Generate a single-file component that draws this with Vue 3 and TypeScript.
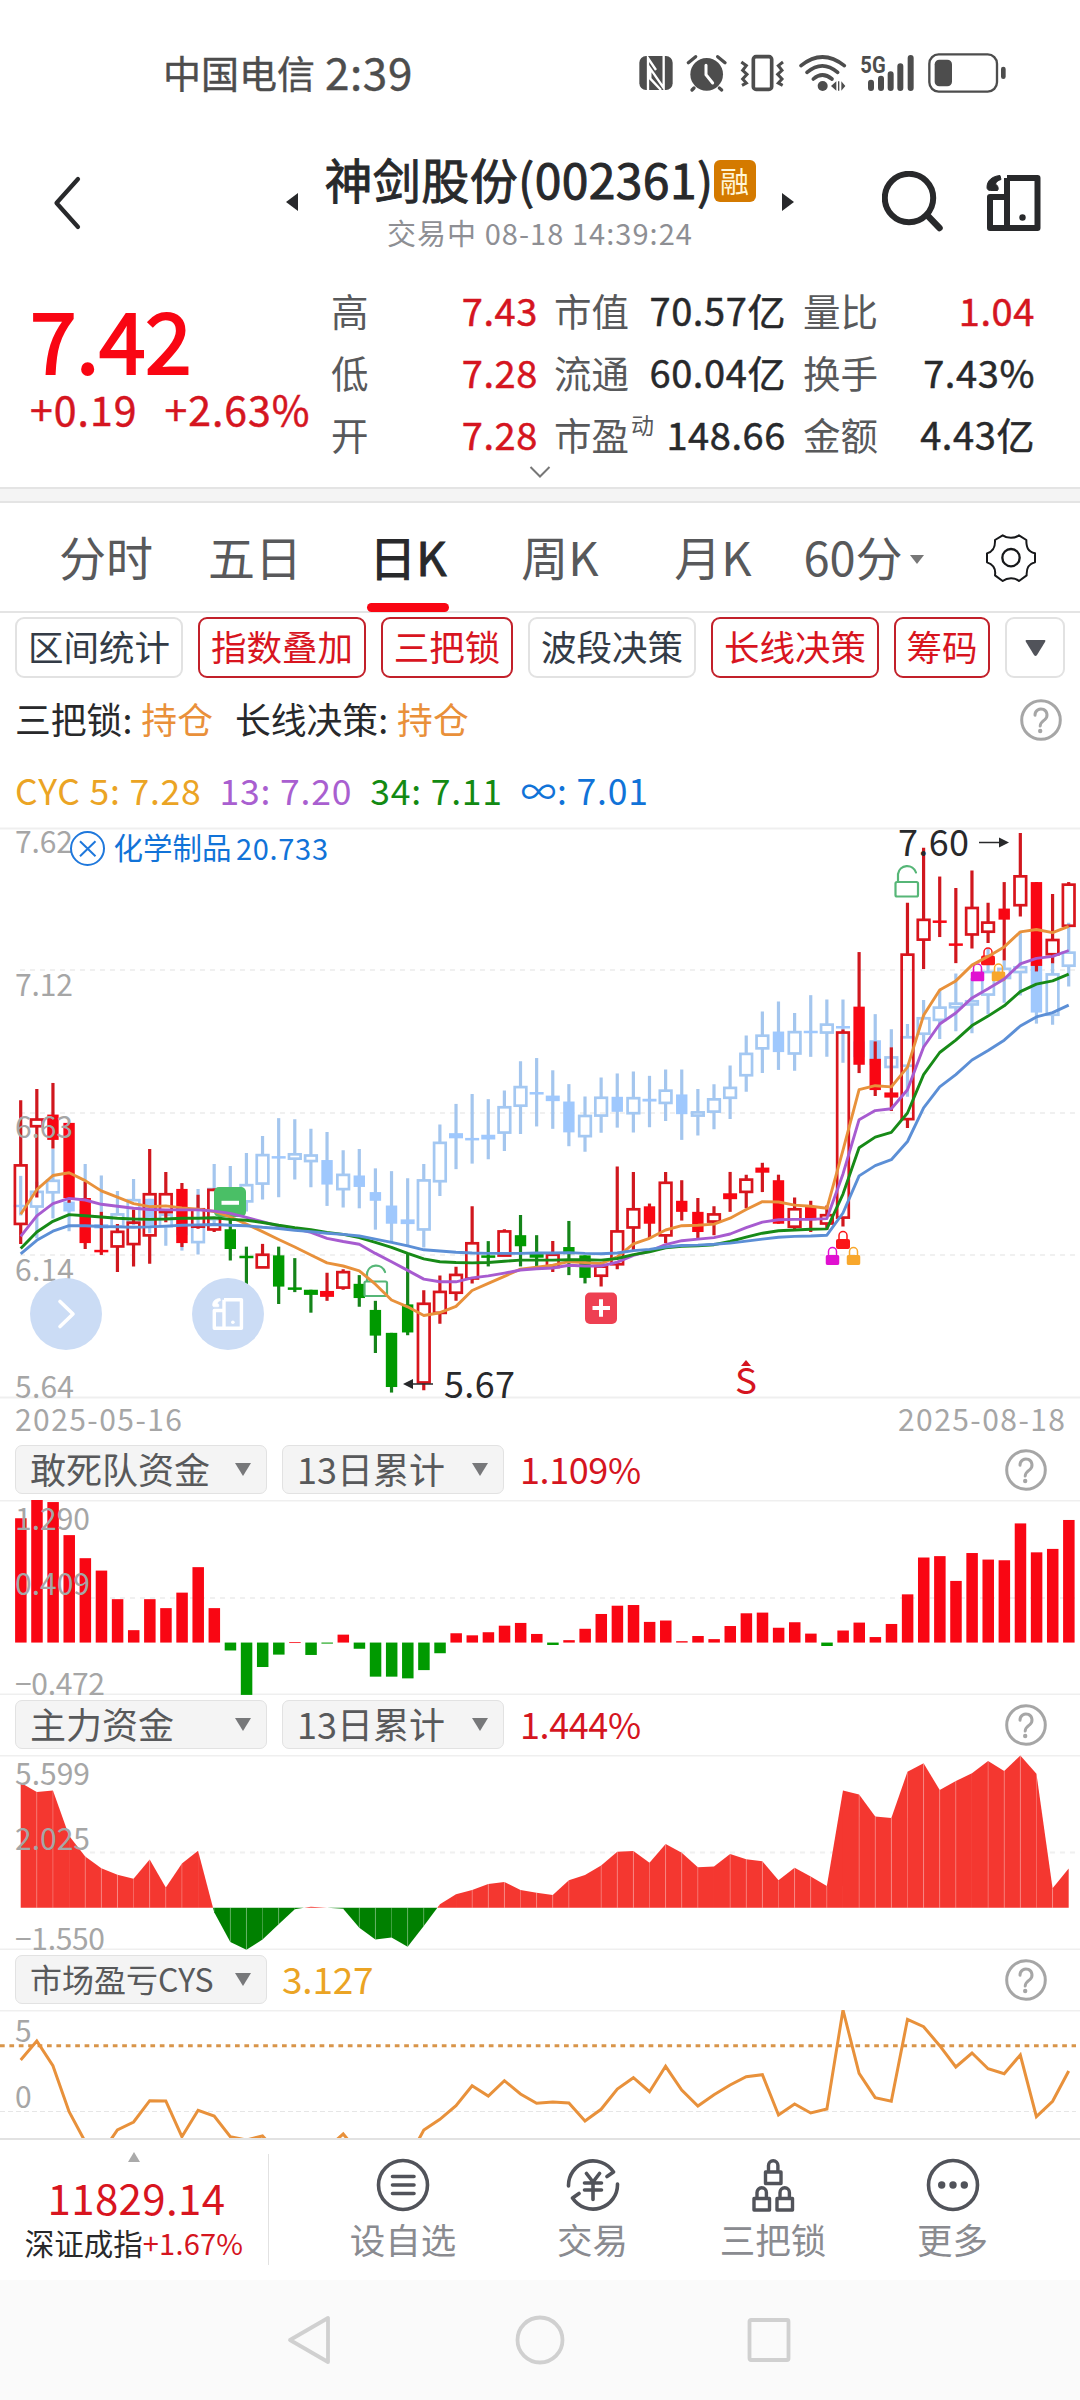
<script setup lang="ts">
type Kind = 'hollow' | 'solid'
interface Candle { x: number; high: number; top: number; bottom: number; low: number; kind: Kind; color: string }

const STEP = 16.123
const X0 = 20.7
const V = 2.529 // vertical data units per pixel in the main chart
const xAt = (i: number): number => X0 + i * STEP
const y = (v: number): number => v / V

// [high, body top, body bottom, low, kind] per trading day; r = hollow red, R = solid red, G = solid green
type Row = [number, number, number, number, string]
const stock: Row[] = [
  [709, 873, 1022, 1072, 'r'], [680, 757, 775, 955, 'r'], [665, 745, 809, 831, 'R'], [766, 766, 956, 968, 'R'],
  [915, 956, 1070, 1085, 'R'], [991, 1087, 1092, 1100, 'R'], [1022, 1041, 1079, 1143, 'r'], [985, 1018, 1073, 1129, 'r'],
  [832, 946, 1051, 1122, 'r'], [890, 946, 992, 1017, 'r'], [918, 933, 1070, 1080, 'R'], [948, 984, 1029, 1034, 'r'],
  [932, 935, 1036, 1042, 'r'], [1010, 1035, 1085, 1114, 'G'], [1079, 1102, 1107, 1195, 'G'], [1072, 1099, 1132, 1132, 'r'],
  [1079, 1101, 1180, 1224, 'G'], [1108, 1182, 1187, 1194, 'G'], [1188, 1188, 1201, 1246, 'G'], [1145, 1191, 1206, 1216, 'R'],
  [1136, 1143, 1183, 1188, 'r'], [1151, 1173, 1209, 1231, 'G'], [1216, 1239, 1304, 1348, 'G'], [1297, 1297, 1434, 1448, 'G'],
  [1095, 1225, 1296, 1303, 'G'], [1189, 1223, 1423, 1442, 'r'], [1152, 1193, 1247, 1274, 'r'], [1130, 1150, 1196, 1216, 'r'],
  [977, 1070, 1160, 1172, 'r'], [1065, 1101, 1106, 1129, 'G'], [1035, 1040, 1102, 1102, 'r'], [999, 1050, 1078, 1129, 'G'],
  [1050, 1097, 1107, 1129, 'G'], [1065, 1099, 1131, 1143, 'r'], [1014, 1080, 1098, 1151, 'G'], [1101, 1101, 1158, 1172, 'G'],
  [1118, 1129, 1153, 1180, 'r'], [876, 1040, 1124, 1136, 'r'], [890, 984, 1031, 1088, 'r'], [970, 977, 1021, 1058, 'R'],
  [890, 917, 1051, 1070, 'r'], [911, 963, 991, 1013, 'R'], [956, 991, 1042, 1057, 'R'], [977, 997, 1016, 1050, 'r'],
  [890, 944, 959, 991, 'R'], [897, 909, 941, 982, 'r'], [867, 879, 892, 941, 'R'], [897, 911, 1021, 1021, 'R'],
  [955, 984, 1029, 1036, 'r'], [963, 977, 1012, 1042, 'R'], [975, 999, 1021, 1036, 'r'], [530, 537, 1006, 1028, 'r'],
  [334, 472, 619, 640, 'R'], [560, 604, 683, 698, 'R'], [575, 689, 702, 736, 'R'], [209, 340, 757, 779, 'r'],
  [70, 252, 303, 377, 'r'], [143, 254, 258, 296, 'R'], [172, 312, 317, 362, 'R'], [128, 222, 290, 325, 'r'],
  [209, 259, 283, 311, 'r'], [157, 224, 252, 355, 'R'], [33, 142, 216, 244, 'r'], [157, 157, 369, 383, 'R'],
  [187, 303, 340, 362, 'r'], [157, 163, 268, 268, 'r'],
]
// b = hollow, B = solid
const sector: Row[] = [
  [900, 973, 977, 1000, 'B'], [915, 940, 978, 1058, 'b'], [832, 912, 942, 1008, 'b'], [940, 965, 990, 1040, 'B'],
  [870, 985, 1022, 1040, 'B'], [899, 1022, 1033, 1033, 'B'], [938, 997, 1028, 1045, 'b'], [908, 961, 1018, 1025, 'b'],
  [958, 958, 1030, 1045, 'B'], [985, 998, 1028, 1077, 'b'], [1000, 1010, 1050, 1089, 'B'], [933, 1025, 1068, 1099, 'b'],
  [870, 933, 1010, 1020, 'b'], [875, 985, 1005, 1020, 'B'], [842, 923, 965, 990, 'b'], [799, 847, 920, 960, 'b'],
  [754, 850, 855, 954, 'B'], [757, 845, 857, 909, 'b'], [781, 848, 863, 929, 'b'], [789, 860, 922, 976, 'B'],
  [835, 897, 934, 980, 'b'], [832, 899, 928, 982, 'B'], [881, 941, 963, 1036, 'B'], [888, 975, 1021, 1070, 'B'],
  [906, 1010, 1022, 1077, 'B'], [870, 911, 1036, 1081, 'b'], [770, 816, 914, 951, 'b'], [718, 792, 805, 883, 'B'],
  [693, 804, 808, 869, 'B'], [706, 796, 808, 858, 'B'], [684, 726, 791, 837, 'b'], [610, 675, 723, 794, 'b'],
  [602, 688, 692, 775, 'B'], [633, 697, 711, 781, 'B'], [668, 712, 790, 825, 'B'], [699, 748, 800, 839, 'b'],
  [651, 702, 748, 791, 'b'], [641, 700, 738, 778, 'B'], [636, 703, 742, 790, 'b'], [647, 705, 712, 777, 'B'],
  [631, 684, 716, 761, 'b'], [631, 694, 744, 809, 'B'], [680, 739, 748, 798, 'b'], [668, 706, 738, 782, 'b'],
  [621, 677, 703, 756, 'b'], [545, 591, 646, 687, 'b'], [484, 545, 578, 640, 'b'], [459, 535, 587, 632, 'B'],
  [488, 536, 591, 634, 'b'], [443, 533, 537, 599, 'B'], [454, 517, 538, 599, 'b'], [454, 521, 526, 614, 'B'],
  [530, 560, 600, 615, 'B'], [491, 557, 620, 640, 'B'], [529, 600, 625, 660, 'b'], [516, 549, 622, 700, 'b'],
  [455, 501, 541, 575, 'b'], [430, 474, 506, 554, 'b'], [388, 464, 474, 534, 'b'], [400, 458, 467, 539, 'b'],
  [325, 384, 442, 491, 'b'], [355, 376, 400, 462, 'b'], [282, 372, 385, 444, 'b'], [280, 300, 487, 515, 'B'],
  [340, 390, 493, 518, 'b'], [260, 335, 369, 421, 'b'],
]
const palette: Record<string, [Kind, string]> = {
  r: ['hollow', '#d9141c'], R: ['solid', '#f90613'], G: ['solid', '#009a00'],
  b: ['hollow', '#a4c8f2'], B: ['solid', '#9fc8fd'],
}
const wick: Record<string, string> = { r: '#d0171e', R: '#d0171e', G: '#15841a', b: '#a4c6ee', B: '#a4c6ee' }
const toCandles = (rows: Row[]): (Candle & { wick: string; bw: number })[] =>
  rows.map(([high, top, bottom, low, k], i) => ({
    x: xAt(i), high: y(high), top: y(top), bottom: y(bottom), low: y(low),
    kind: palette[k][0], color: palette[k][1], wick: wick[k], bw: bottom - top < 17 ? 14 : 11.4,
  }))
const layers = [toCandles(sector), toCandles(stock)]

const cyc = [
  { color: '#e8913b', v: [997, 935, 899, 892, 912, 938, 954, 970, 978, 976, 981, 984, 990, 1004, 1022, 1041, 1061, 1080, 1100, 1120, 1128, 1140, 1174, 1214, 1231, 1253, 1246, 1230, 1190, 1172, 1154, 1136, 1131, 1126, 1117, 1119, 1122, 1105, 1072, 1058, 1037, 1026, 1025, 1022, 1007, 985, 965, 966, 974, 977, 982, 835, 682, 672, 675, 625, 494, 430, 407, 367, 345, 321, 283, 277, 285, 269] },
  { color: '#a75bd0', v: [1053, 1001, 970, 957, 961, 972, 977, 982, 985, 986, 986, 986, 989, 995, 1005, 1016, 1027, 1033, 1043, 1058, 1066, 1073, 1096, 1117, 1139, 1161, 1168, 1168, 1158, 1153, 1146, 1138, 1135, 1133, 1126, 1128, 1128, 1118, 1101, 1090, 1074, 1064, 1060, 1056, 1047, 1031, 1017, 1011, 1010, 1010, 1008, 895, 758, 735, 730, 682, 574, 516, 488, 450, 427, 402, 364, 350, 345, 330] },
  { color: '#178a17', v: [1084, 1042, 1015, 998, 1001, 1004, 1007, 1009, 1010, 1009, 1007, 1007, 1006, 1010, 1012, 1018, 1025, 1031, 1036, 1043, 1048, 1056, 1068, 1081, 1096, 1110, 1117, 1119, 1120, 1119, 1116, 1113, 1113, 1113, 1112, 1112, 1113, 1109, 1099, 1092, 1082, 1078, 1077, 1074, 1066, 1055, 1045, 1039, 1037, 1035, 1034, 946, 829, 802, 790, 741, 644, 588, 557, 520, 496, 470, 434, 415, 407, 390] },
  { color: '#5c8fd6', v: [1097, 1063, 1040, 1026, 1026, 1028, 1029, 1030, 1029, 1027, 1025, 1024, 1023, 1025, 1026, 1030, 1033, 1038, 1041, 1045, 1048, 1052, 1060, 1068, 1077, 1087, 1090, 1093, 1095, 1096, 1096, 1096, 1095, 1095, 1094, 1096, 1097, 1095, 1089, 1086, 1080, 1076, 1075, 1073, 1070, 1065, 1060, 1055, 1053, 1052, 1050, 994, 900, 874, 859, 813, 728, 675, 644, 607, 583, 557, 521, 498, 487, 468] },
].map((l) => ({ color: l.color, points: l.v.map((v, i) => `${xAt(i).toFixed(1)},${y(v).toFixed(1)}`).join(' ') }))

// Daily bars: offset from the zero line, positive upwards
const S = 2.904
const fundBars = [361, 414, 408, 312, 245, 209, 126, 36, 126, 100, 145, 219, 100, -23, -152, -71, -35, 1, -36, -3, 23, -18, -99, -99, -104, -80, -31, 27, 21, 30, 49, 57, 25, -7, 7, 40, 83, 107, 109, 60, 64, 4, 19, 10, 48, 85, 87, 43, 59, 26, -10, 35, 58, 16, 54, 140, 247, 251, 179, 260, 241, 239, 346, 262, 272, 356]
  .map((v, i) => ({ x: xAt(i) - 5.6, y: v > 0 ? (414 - v) / S : 414 / S, h: Math.max(Math.abs(v) / S, 0.8), color: v > 0 ? '#f90613' : '#009a00' }))

const mainFund = [363, 336, 341, 209, 149, 115, 96, 84, 140, 59, 129, 166, -13, -99, -122, -92, -48, -4, 3, 0, -3, -58, -92, -86, -113, -53, 10, 39, 52, 69, 75, 52, 44, 37, 80, 95, 123, 163, 165, 131, 185, 160, 118, 120, 156, 141, 135, 80, 116, 91, 63, 341, 329, 265, 261, 395, 420, 342, 368, 391, 426, 397, 442, 389, 57, 114]
const BASE = 152.8
const slices: { points: string; color: string }[] = []
for (let i = 0; i < mainFund.length - 1; i++) {
  const a = mainFund[i], b = mainFund[i + 1], x1 = xAt(i), x2 = xAt(i + 1)
  const poly = (xa: number, va: number, xb: number, vb: number): void => {
    slices.push({ points: `${xa},${BASE} ${xa},${BASE - va / S} ${xb},${BASE - vb / S} ${xb},${BASE}`, color: va + vb > 0 ? '#f43730' : '#008000' })
  }
  if (a * b < 0) {
    const xm = x1 + (x2 - x1) * (a / (a - b))
    poly(x1, a, xm, 0)
    poly(xm, 0, x2, b)
  } else poly(x1, a, x2, b)
}
const seams = mainFund.map((v, i) => ({ x: xAt(i), y2: BASE - v / S, show: Math.abs(v) > 20 && i % 4 !== 3 && i > 0 && i < 65 }))

const cys = [360, 303, 377, 515, 605, 640, 570, 546, 482, 483, 590, 511, 528, 590, 600, 588, 640, 650, 650, 625, 582, 640, 650, 650, 660, 570, 538, 497, 437, 468, 422, 462, 490, 486, 489, 543, 508, 447, 413, 455, 379, 450, 498, 464, 435, 410, 404, 525, 492, 519, 507, 210, 400, 473, 484, 238, 260, 317, 381, 339, 386, 401, 345, 530, 484, 393]
  .map((v, i) => `${xAt(i).toFixed(1)},${((v - 210) / 3).toFixed(1)}`).join(' ')

const tabs = [
  { t: '分时', w: 92, ml: 60 }, { t: '五日', w: 90, ml: 58 }, { t: '日K', w: 82, ml: 67, on: true },
  { t: '周K', w: 82, ml: 70 }, { t: '月K', w: 82, ml: 71 }, { t: '60分', w: 102, ml: 48, more: true },
]
const chips = [
  { t: '区间统计', w: 168 }, { t: '指数叠加', w: 168, on: true }, { t: '三把锁', w: 132, on: true },
  { t: '波段决策', w: 168 }, { t: '长线决策', w: 168, on: true }, { t: '筹码', w: 96, on: true },
]
const stats = [
  ['高', '7.43', '市值', '70.57亿', '量比', '1.04'],
  ['低', '7.28', '流通', '60.04亿', '换手', '7.43%'],
  ['开', '7.28', '市盈', '148.66', '金额', '4.43亿'],
]
const lockSets = [{ x: 843, y: 410 }, { x: 988, y: 126.5 }]
const lockParts = [{ dx: 0, dy: 0, c: '#fb1518' }, { dx: -10.5, dy: 16, c: '#e010d0' }, { dx: 10.5, dy: 16, c: '#f8a72c' }]
</script>

<template>
  <div class="screen">
    <svg class="defs" width="0" height="0">
      <symbol id="help" viewBox="0 0 42 42">
        <circle cx="21" cy="21" r="19.3" fill="none" stroke="#a6a6a6" stroke-width="3" />
        <path d="M15 16.200a6 6 0 1 1 9.800 4.400c-2.600 2-4.400 3.200-4.600 6.400" fill="none" stroke="#a6a6a6" stroke-width="3" stroke-linecap="round" />
        <circle cx="20.200" cy="32" r="2.200" fill="#a6a6a6" />
      </symbol>
      <symbol id="rotate" viewBox="0 0 56 56">
        <path d="M21 3h30.500v50H4V22h17M21 3v50" fill="none" stroke="currentColor" stroke-width="6" stroke-linejoin="round" />
        <path d="M14 .5c-8 .8-13 5-13 12 0 2 1.500 3 3.500 3h7c1.500-1.500.5-5-2-6.500 1-2.500 2.500-3.500 5.500-4.500z" fill="currentColor" stroke="currentColor" stroke-width="1" />
        <circle cx="36.500" cy="42.500" r="3.200" fill="currentColor" />
      </symbol>
      <symbol id="smallLock" viewBox="0 0 14 19">
        <path d="M3 10V5.500a4 4 0 0 1 8 0V10" fill="none" stroke="currentColor" stroke-width="1.500" />
        <rect x="0" y="9" width="14" height="10" rx="2" fill="currentColor" />
      </symbol>
      <symbol id="openLock" viewBox="0 0 26 35">
        <rect x="1.500" y="18.500" width="22.500" height="14.500" rx="1.500" fill="#fff" fill-opacity=".8" stroke="#56b677" stroke-width="2.200" />
        <path d="M4 18v-7.500a9.300 9.300 0 0 1 18-1.500" fill="none" stroke="#56b677" stroke-width="2.200" stroke-linecap="round" />
      </symbol>
    </svg>

    <header class="status">
      <div class="carrier"><span class="op">中国电信</span><span class="clock">2:39</span></div>
      <svg class="status-icons" viewBox="90 45 1140 168" width="380" height="56">
        <rect x="118" y="78" width="100" height="102" rx="20" fill="#4d4d4d" />
        <path d="M138 76h16l42 84V98q0-12-6-20h-8l0 56-30-52zM146 182V92" fill="none" stroke="#fff" stroke-width="0" />
        <path d="M144 180V84l24 36M191 78v96l-40-58v30l32 34" fill="none" stroke="#fff" stroke-width="7" />
        <circle cx="320" cy="133" r="49" fill="#4d4d4d" />
        <path d="M265 98l22-18M375 98l-22-18M282 174l-6 6M358 174l7 6" stroke="#4d4d4d" stroke-width="10" stroke-linecap="round" />
        <path d="M318 106v28l20 25" fill="none" stroke="#fff" stroke-width="9" stroke-linecap="round" />
        <rect x="460" y="80" width="55" height="98" rx="8" fill="none" stroke="#4d4d4d" stroke-width="11" />
        <path d="M424 96l15 11-11 14 13 12-13 14 11 12-13 7M549 96l-14 11 11 14-13 12 13 14-11 12 13 7" fill="none" stroke="#4d4d4d" stroke-width="9" />
        <path d="M603 107q64-52 130 0M621 127q46-39 92 0M640 147q27-24 56 0" fill="none" stroke="#4d4d4d" stroke-width="11" stroke-linecap="round" />
        <circle cx="668" cy="168" r="15" fill="#4d4d4d" />
        <path d="M693 168l16-14v28zM736 168l-12 14v-28zM714 154h4v28h-4z" fill="#4d4d4d" />
        <text x="781" y="129" font-size="72" font-weight="700" fill="#4d4d4d" textLength="76" lengthAdjust="spacingAndGlyphs" class="fiveg">5G</text>
        <path d="M813 158v16M843 146v28M872 133v41M901 109v65M932 84v90" stroke="#4d4d4d" stroke-width="18" stroke-linecap="round" />
        <rect x="988" y="73" width="203" height="112" rx="28" fill="none" stroke="#4d4d4d" stroke-width="7" />
        <rect x="1004" y="89" width="52" height="80" rx="14" fill="#4d4d4d" />
        <rect x="1203" y="110" width="14" height="37" rx="7" fill="#4d4d4d" />
      </svg>
    </header>

    <nav class="head">
      <svg class="back" viewBox="0 0 28 54" width="28" height="54"><path d="M25 3L3.500 27 25 51" fill="none" stroke="#28292b" stroke-width="4.200" stroke-linecap="round" stroke-linejoin="round" /></svg>
      <svg class="prev" viewBox="0 0 12 18" width="12" height="18"><path d="M12 0v18L0 9z" fill="#28292b" /></svg>
      <div class="title-box">
        <div class="title"><span>神剑股份(002361)</span><b class="rong">融</b></div>
        <div class="sub">交易中 08-18 14:39:24</div>
      </div>
      <svg class="next" viewBox="0 0 12 18" width="12" height="18"><path d="M0 0v18l12-9z" fill="#28292b" /></svg>
      <svg class="search" viewBox="0 0 62 62" width="62" height="62"><circle cx="27" cy="27" r="24.200" fill="none" stroke="#28292b" stroke-width="6" /><path d="M45 44l12.500 13" stroke="#28292b" stroke-width="6.500" stroke-linecap="round" /></svg>
      <svg class="rot" width="56" height="56"><use href="#rotate" /></svg>
    </nav>

    <section class="quote">
      <div class="price-box">
        <div class="price">7.42</div>
        <div class="delta"><span>+0.19</span><span>+2.63%</span></div>
      </div>
      <div class="grid">
        <template v-for="(r, i) in stats" :key="i">
          <span class="lab">{{ r[0] }}</span><span class="val red">{{ r[1] }}</span>
          <span class="lab">{{ r[2] }}<sup v-if="i === 2">动</sup></span><span class="val">{{ r[3] }}</span>
          <span class="lab">{{ r[4] }}</span><span class="val" :class="{ red: i === 0 }">{{ r[5] }}</span>
        </template>
      </div>
      <svg class="expand" viewBox="0 0 22 14" width="22" height="14"><path d="M1.500 2L11 11.500 20.500 2" fill="none" stroke="#777" stroke-width="2" /></svg>
    </section>
    <div class="gap"></div>

    <nav class="tabs">
      <div v-for="t in tabs" :key="t.t" class="tab" :class="{ on: t.on }" :style="{ width: t.w + 'px', marginLeft: t.ml + 'px' }">{{ t.t }}</div>
      <svg class="tri" viewBox="0 0 14 9" width="14" height="9"><path d="M0 0h14L7 9z" fill="#777" /></svg>
      <svg class="gear" viewBox="0 0 150 144" width="50" height="48">
        <path d="M50 4c14 10 36 10 49 0l22 14c0 22 4 34 26 40v27c-22 6-26 20-25 39l-23 17c-12-11-35-11-49 0L27 124c3-20-3-32-24-39V58c20-6 25-19 24-40z" fill="none" stroke="#17181a" stroke-width="6" stroke-linejoin="round" />
        <circle cx="75" cy="71" r="26" fill="none" stroke="#17181a" stroke-width="7" />
      </svg>
    </nav>

    <div class="chips">
      <div v-for="c in chips" :key="c.t" class="chip" :class="{ on: c.on }" :style="{ width: c.w + 'px' }">{{ c.t }}</div>
      <div class="chip more"><svg viewBox="0 0 21 16" width="21" height="16"><path d="M1.500 0h18Q21 0 20 2L12 15q-1.500 2-3 0L1 2Q0 0 1.500 0z" fill="#51535a" /></svg></div>
    </div>

    <div class="signal">
      <span>三把锁:</span><em>持仓</em><span class="second">长线决策:</span><em>持仓</em>
      <svg class="q" width="42" height="42"><use href="#help" /></svg>
    </div>
    <div class="cyc">
      <span style="color: #eba424">CYC 5: 7.28</span><span style="color: #a95fd0">13: 7.20</span><span style="color: #138a13">34: 7.11</span><span style="color: #1173d8">∞: 7.01</span>
    </div>

    <svg class="kline" viewBox="0 0 1080 620" width="1080" height="620">
      <path d="M0 8.500H1080M0 577.500H1080" stroke="#efefef" stroke-width="2" />
      <path d="M20 150H1076M20 293H1076M20 435H1076" stroke="#f0f0f0" stroke-width="2" stroke-dasharray="5 5" />
      <g v-for="(layer, n) in layers" :key="n">
        <g v-for="(c, i) in layer" :key="i">
          <template v-if="c.kind === 'hollow'">
            <path :d="`M${c.x} ${c.high}V${c.top}M${c.x} ${c.bottom}V${c.low}`" :stroke="c.wick" stroke-width="3.200" />
            <rect :x="c.x - 5.8" :y="c.top + 0.2" width="11.600" :height="Math.max(c.bottom - c.top - 0.4, 1.500)" fill="none" :stroke="c.color" stroke-width="2.700" />
          </template>
          <template v-else>
            <path :d="`M${c.x} ${c.high}V${c.low}`" :stroke="c.wick" stroke-width="3.200" />
            <rect :x="c.x - c.bw / 2" :y="c.top" :width="c.bw" :height="Math.max(c.bottom - c.top, 2.500)" :fill="c.color" />
          </template>
        </g>
      </g>

      <rect x="214" y="367" width="32" height="30" rx="5" fill="#4abf66" />
      <path d="M221.500 382.800h17.500" stroke="#fff" stroke-width="4" />
      <rect x="585" y="472.500" width="32" height="31.500" rx="5" fill="#ee4052" />
      <path d="M592.500 488h17.500M601 479.300v17.500" stroke="#fff" stroke-width="4" />
      <use href="#openLock" x="363" y="443" width="26" height="35" />
      <use href="#openLock" x="894" y="43.500" width="26" height="35" />
      <template v-for="(s, i) in lockSets" :key="i">
        <use v-for="p in lockParts" :key="p.c" href="#smallLock" :x="s.x + p.dx - 7" :y="s.y + p.dy" width="14" height="19" :color="p.c" />
      </template>
      <polyline v-for="l in cyc" :key="l.color" :points="l.points" fill="none" :stroke="l.color" stroke-width="2.900" stroke-linejoin="round" />

      <g class="axis">
        <text x="15" y="33" textLength="58">7.62</text>
        <text x="15" y="176" textLength="58">7.12</text>
        <text x="15" y="318" textLength="58">6.63</text>
        <text x="15" y="461" textLength="59">6.14</text>
        <text x="15" y="578" textLength="59">5.64</text>
        <text x="15" y="611" textLength="167">2025-05-16</text>
        <text x="898" y="611" textLength="167">2025-08-18</text>
      </g>
      <g fill="none" stroke="#1f78dc" stroke-width="2">
        <circle cx="87.500" cy="28.500" r="16.500" />
        <path d="M80 21.300l15.500 15M95.500 21.300L80 36.300" />
      </g>
      <text x="113.500" y="39" font-size="29.500" fill="#1173d8" textLength="118">化学制品</text>
      <text x="236" y="39.500" font-size="29" fill="#1173d8" textLength="92">20.733</text>
      <text x="898" y="36" font-size="36" fill="#28292b" textLength="71">7.60</text>
      <path d="M979 22.500h22" stroke="#28292b" stroke-width="1.500" /><path d="M999 17.500l10 5-10 5z" fill="#28292b" />
      <text x="444" y="577.500" font-size="36" fill="#28292b" textLength="71">5.67</text>
      <path d="M410 564h23" stroke="#28292b" stroke-width="1.500" /><path d="M413 559l-10 5 10 5z" fill="#28292b" />
      <text x="735" y="573.500" font-size="36" fill="#d5151f" textLength="22" lengthAdjust="spacingAndGlyphs">S</text>
      <path d="M741 546l5-6 5 6z" fill="#d5151f" />

      <circle cx="66" cy="494" r="36" fill="#cbdcf5" />
      <path d="M60 481.500L73 494 60 506.500" fill="none" stroke="#fff" stroke-width="3.600" stroke-linecap="round" stroke-linejoin="round" />
      <circle cx="228" cy="494" r="36" fill="#cbdcf5" />
      <use href="#rotate" x="212" y="478" width="32" height="32" color="#fff" />
    </svg>

    <div class="ind-head">
      <div class="pick">敢死队资金<i></i></div><div class="pick mid">13日累计<i></i></div><span class="num red">1.109%</span>
      <svg class="q" width="42" height="42"><use href="#help" /></svg>
    </div>
    <svg class="plot" viewBox="0 0 1080 195" width="1080" height="195">
      <path d="M0 0.500H1080M0 194.500H1080" stroke="#efefef" stroke-width="2" />
      <path d="M90 98H1076" stroke="#f0f0f0" stroke-width="2" stroke-dasharray="5 5" />
      <rect v-for="(b, i) in fundBars" :key="i" :x="b.x" :y="b.y" width="11.500" :height="b.h" :fill="b.color" />
      <g class="axis">
        <text x="15" y="30" textLength="75">1.290</text><text x="15" y="94.500" textLength="75">0.409</text><text x="15" y="194.500" textLength="90">−0.472</text>
      </g>
    </svg>

    <div class="ind-head">
      <div class="pick">主力资金<i></i></div><div class="pick mid">13日累计<i></i></div><span class="num red">1.444%</span>
      <svg class="q" width="42" height="42"><use href="#help" /></svg>
    </div>
    <svg class="plot" viewBox="0 0 1080 195" width="1080" height="195">
      <path d="M0 0.500H1080M0 194.500H1080" stroke="#efefef" stroke-width="2" />
      <path d="M90 97.500H1076" stroke="#f0f0f0" stroke-width="2" stroke-dasharray="5 5" />
      <polygon v-for="(s, i) in slices" :key="i" :points="s.points" :fill="s.color" />
      <template v-for="(s, i) in seams" :key="'s' + i"><path v-if="s.show" :d="`M${s.x} ${BASE}V${s.y2}`" stroke="#fff" stroke-opacity=".22" stroke-width="1" /></template>
      <g class="axis">
        <text x="15" y="30" textLength="75">5.599</text><text x="15" y="95" textLength="75">2.025</text><text x="15" y="194.500" textLength="90">−1.550</text>
      </g>
    </svg>

    <div class="ind-head">
      <div class="pick small">市场盈亏CYS<i></i></div><span class="num gold">3.127</span>
      <svg class="q" width="42" height="42"><use href="#help" /></svg>
    </div>
    <svg class="plot" viewBox="0 0 1080 128" width="1080" height="128">
      <path d="M0 0.500H1080" stroke="#efefef" stroke-width="2" />
      <path d="M0 101.500H1076" stroke="#e6e6e6" stroke-width="1.200" stroke-dasharray="5 3" />
      <path d="M0 35.700H1076" stroke="#d8954a" stroke-width="3" stroke-dasharray="4.700 4.700" />
      <g class="axis"><text x="15" y="32">5</text><text x="15" y="98">0</text></g>
      <polyline :points="cys" fill="none" stroke="#e8913b" stroke-width="3" stroke-linejoin="miter" />
    </svg>

    <footer class="bar">
      <div class="index">
        <svg class="up" viewBox="0 0 12 10" width="12" height="10"><path d="M6 0l6 10H0z" fill="#aaa" /></svg>
        <div class="points">11829.14</div>
        <div class="name">深证成指<span>+1.67%</span></div>
      </div>
      <div class="tool t1">
        <svg viewBox="0 0 54 54" width="54" height="54" fill="none" stroke="#51535a" stroke-width="3.600" stroke-linecap="round"><circle cx="27" cy="27" r="24.500" /><path d="M16.500 18.500h21.500M16.500 27h21.500M16.500 35.500h21.500" /></svg>
        <span>设自选</span>
      </div>
      <div class="tool t2">
        <svg viewBox="0 0 54 54" width="54" height="54" fill="none" stroke="#51535a" stroke-width="3.600" stroke-linecap="round" stroke-linejoin="round"><path d="M2.500 28A24.500 24.500 0 0 1 47.500 14l-6.500 4.500M51.500 26A24.500 24.500 0 0 1 6.500 40l6.500-4.500M20.500 15.500l6.500 8.500 6.500-8.500M18.500 25h17M18.500 32h17M27 24v17.500" /></svg>
        <span>交易</span>
      </div>
      <div class="tool t3">
        <svg viewBox="0 0 54 54" width="54" height="54" fill="none" stroke="#51535a" stroke-width="3.400" stroke-linejoin="round"><path d="M19.500 14h15.500v11.500H19.500zM22.500 14V7.500a4.700 4.700 0 0 1 9.400 0V14M8 40.500h15.500v11.500H8zM11 40.500V34.500a4.700 4.700 0 0 1 9.400 0v6M31 40.500h15.500v11.500H31zM34 40.500V34.500a4.700 4.700 0 0 1 9.400 0v6" /></svg>
        <span>三把锁</span>
      </div>
      <div class="tool t4">
        <svg viewBox="0 0 54 54" width="54" height="54"><circle cx="27" cy="27" r="24.500" fill="none" stroke="#51535a" stroke-width="3.600" /><g fill="#51535a"><circle cx="15.700" cy="27" r="3.700" /><circle cx="27" cy="27" r="3.700" /><circle cx="38.300" cy="27" r="3.700" /></g></svg>
        <span>更多</span>
      </div>
    </footer>

    <div class="sysnav">
      <svg class="s1" viewBox="0 0 44 50" width="44" height="50"><path d="M41 3v44L3 25z" /></svg>
      <svg class="s2" viewBox="0 0 50 50" width="50" height="50"><circle cx="25" cy="25" r="22.500" /></svg>
      <svg class="s3" viewBox="0 0 46 46" width="46" height="46"><rect x="3.500" y="3" width="39" height="40" rx="1.500" /></svg>
    </div>
  </div>
</template>

<style>
body { margin: 0; background: #fff; }
</style>

<style scoped>
.screen { width: 1080px; height: 2400px; overflow: hidden; background: #fff; color: #28292b; font-family: "Noto Sans CJK SC", "Noto Sans", sans-serif; display: flex; flex-direction: column; }
.screen > * { flex: none; box-sizing: border-box; }
.screen > .defs { position: absolute; }
svg { display: block; }
.red { color: #d5151f !important; }
.status { height: 146px; display: flex; padding: 45px 70px 0 163px; color: #4d4d4d; }
.carrier { display: flex; flex: 1; align-items: baseline; font-size: 38px; line-height: 52px; white-space: nowrap; -webkit-text-stroke: 0.4px; }
.op { position: relative; top: -2px; }
.clock { font-size: 44px; margin-left: 10px; letter-spacing: 0.6px; }
.fiveg { font-family: "Roboto", sans-serif; }
.head { height: 134px; display: flex; align-items: flex-start; }
.back { margin: 30px 0 0 53px; }
.prev { margin: 47px 0 0 205px; }
.title-box { width: 484px; display: flex; flex-direction: column; align-items: center; }
.title { display: flex; align-items: center; font-size: 48px; line-height: 60px; margin-top: 2px; white-space: nowrap; -webkit-text-stroke: 0.9px; }
.title span { letter-spacing: 0.4px; }
.rong { width: 42px; height: 42px; border-radius: 6px; background: #d47a00; color: #fff6d8; font-size: 29px; line-height: 40px; text-align: center; font-weight: 400; margin-left: 0; margin-top: 5px; -webkit-text-stroke: 0; }
.sub { font-size: 29px; line-height: 40px; margin-top: 4px; color: #8e8f94; letter-spacing: 1.05px; white-space: nowrap; }
.next { margin: 47px 0 0 0; }
.search { margin: 25px 0 0 88px; }
.rot { margin: 29px 0 0 42px; color: #28292b; }
.quote { height: 207px; position: relative; display: flex; }
.price-box { width: 331px; padding-left: 30px; box-sizing: border-box; }
.price { font-size: 84px; line-height: 100px; color: #f90613; margin-top: 8px; letter-spacing: -0.5px; -webkit-text-stroke: 2px; }
.delta { display: flex; gap: 27px; font-size: 41px; line-height: 52px; margin-top: -6px; color: #d5151f; letter-spacing: 1px; -webkit-text-stroke: 0.5px; }
.delta span { white-space: nowrap; }
.grid { display: grid; grid-template-columns: 88px 119px 110px 138px 112px 137px; grid-auto-rows: 62px; font-size: 38px; line-height: 60px; white-space: nowrap; width: 704px; }
.lab { color: #58595b; font-size: 37.5px; }
.lab:nth-child(6n + 3) { padding-left: 16px; }
.lab:nth-child(6n + 5) { padding-left: 17px; }
.val { text-align: right; letter-spacing: 0.6px; -webkit-text-stroke: 0.5px; }
.lab sup { font-size: 23px; line-height: 20px; vertical-align: 16px; margin-left: 2px; }
.expand { position: absolute; left: 529px; top: 185px; }
.gap { height: 16px; background: #f4f4f4; border-top: 2px solid #e4e4e4; border-bottom: 2px solid #e4e4e4; }
.tabs { height: 110px; border-bottom: 2px solid #e4e4e4; display: flex; align-items: flex-start; }
.tab { height: 109px; line-height: 106px; font-size: 47px; color: #58595b; white-space: nowrap; display: flex; justify-content: center; position: relative; }
.tab.on { color: #28292b; -webkit-text-stroke: 1px; }
.tab.on::after { content: ""; position: absolute; height: 9px; bottom: 0; border-radius: 5px; background: #f90613; left: 0; right: 0; }
.tri { margin: 52px 0 0 6px; }
.gear { margin: 31px 0 0 62px; }
.chips { height: 66px; padding: 4px 0 0 15px; display: flex; gap: 15px; }
.chip { box-sizing: border-box; height: 61px; border: 2px solid #e2e2e2; border-radius: 9px; font-size: 35.5px; line-height: 54px; text-align: center; color: #333b46; white-space: nowrap; }
.chip.on { border-color: #c2202a; color: #d8151f; }
.chip.more { width: 60px; display: flex; align-items: center; justify-content: center; }
.signal { height: 66px; margin-top: 8px; display: flex; align-items: center; padding: 0 18px 0 15px; font-size: 35.8px; line-height: 60px; }
.signal span, .signal em { position: relative; top: -2px; }
.signal em { font-style: normal; color: #e9903a; margin-left: 9px; }
.signal .second { margin-left: 22px; }
.signal .q { margin-left: auto; }
.cyc { height: 67px; padding: 7px 0 0 15px; display: flex; gap: 18px; font-size: 35.5px; line-height: 60px; white-space: nowrap; letter-spacing: 0.8px; }
.kline text { font-family: "Noto Sans CJK SC", sans-serif; }
.axis text { font-size: 30px; fill: #a6a6a6; }
.ind-head { height: 60px; display: flex; padding: 5px 33px 0 15px; align-items: flex-start; }
.pick { box-sizing: border-box; width: 252px; height: 49px; border: 1.5px solid #e2e2e2; border-radius: 7px; background: #f4f4f4; color: #58595b; font-size: 36px; line-height: 44px; padding: 0 15px 0 14px; display: flex; justify-content: space-between; white-space: nowrap; }
.pick.mid { width: 222px; margin-left: 15px; }
.pick.small { font-size: 32px; }
.pick i { border: 8px solid transparent; border-top: 13px solid #77787a; border-bottom: 0; height: 0; margin-top: 17px; }
.num { font-size: 36px; line-height: 46px; margin-left: 16px; letter-spacing: -0.4px; }
.gold { color: #eba424; font-size: 37px; margin-left: 15px; letter-spacing: -0.2px; }
.ind-head .q { margin: 4px 0 0 auto; }
.bar { height: 142px; border-top: 2px solid #e2e2e2; display: flex; position: relative; }
.index { width: 269px; height: 111px; margin-top: 14px; border-right: 1.5px solid #e2e2e2; box-sizing: border-box; display: flex; flex-direction: column; align-items: center; }
.up { margin-top: -2px; }
.points { font-size: 42px; line-height: 50px; color: #d8151f; margin-top: 10px; padding-left: 5px; letter-spacing: 0.4px; }
.name { font-size: 29.5px; line-height: 40px; white-space: nowrap; }
.name span { color: #d5151f; font-size: 29px; letter-spacing: 0.2px; }
.tool { width: 160px; display: flex; flex-direction: column; align-items: center; padding-top: 18px; }
.tool span { font-size: 35.5px; line-height: 50px; color: #8a8b90; margin-top: 2px; }
.t1 { margin-left: 54px; }
.t2 { margin-left: 29.5px; }
.t3 { margin-left: 20.5px; }
.t4 { margin-left: 19.5px; }
.sysnav { height: 120px; background: #fafafa; display: flex; align-items: center; }
.sysnav svg { fill: none; stroke: #d0d0d0; stroke-width: 3.8; stroke-linejoin: round; }
.s1 { margin-left: 287px; }
.s2 { margin-left: 184px; }
.s3 { margin-left: 181px; }
</style>
